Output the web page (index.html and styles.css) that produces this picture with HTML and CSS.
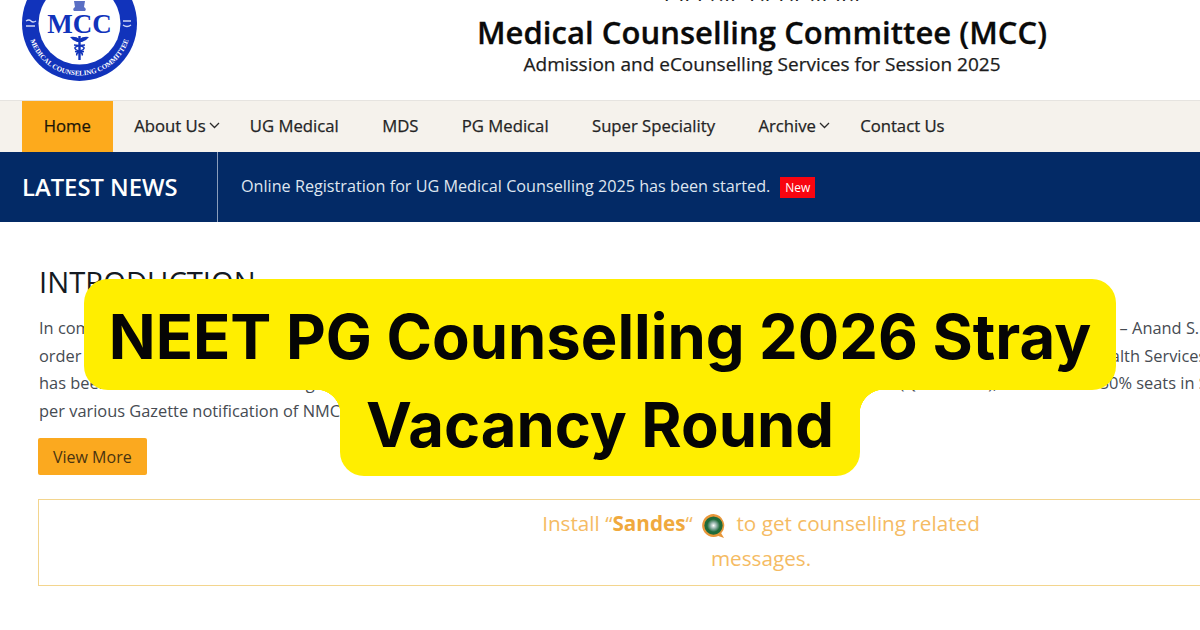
FILE: index.html
```html
<!DOCTYPE html>
<html lang="en">
<head>
<meta charset="utf-8">
<title>NEET PG Counselling 2026 Stray Vacancy Round</title>
<link rel="stylesheet" href="styles.css">
</head>
<body>
<div class="page">
  <header class="masthead">
    <svg class="logo" width="118" height="118" viewBox="0 0 118 118" aria-label="MCC logo">
      <defs>
        <path id="ring-bottom" d="M7.500 59.500a52 52 0 0 0 104 0"/>
        <path id="ring-top" d="M13 59a46 46 0 0 1 92 0"/>
      </defs>
      <circle cx="59.500" cy="59.500" r="57.500" fill="#1133bb"/>
      <circle cx="59.500" cy="59.500" r="41" fill="#fff"/>
      <text class="logo-hindi"><textPath href="#ring-top" startOffset="50%" text-anchor="middle">चिकित्सा परामर्श समिति</textPath></text>
      <text class="logo-ring"><textPath href="#ring-bottom" startOffset="50%" text-anchor="middle">MEDICAL COUNSELING COMMITTEE</textPath></text>
      <text class="logo-mcc" x="59.500" y="69" text-anchor="middle">MCC</text>
      <path d="M54 37h11l-1 6q3 2 1 4h-11q-2-2 1-4z" fill="#5a6fc4"/>
      <path d="M59.500 72v24" stroke="#1133bb" stroke-width="2.400" fill="none"/>
      <path d="M50 73q6-1 9.500 2q3.500-3 9.500-2q-3 4-7 5h-5q-4-1-7-5z" fill="#1133bb"/>
      <path d="M54 81q11 1 10 3.500t-9 3q9 .5 7 4" stroke="#1133bb" stroke-width="1.500" fill="none"/>
      <path d="M65 81q-11 1-10 3.500t9 3q-9 .5-7 4" stroke="#1133bb" stroke-width="1.500" fill="none"/>
      <path d="M6 57q3-2 5 0t5 0M6 62h9M103 57h8M103 61q4 3 8 0" stroke="#cfd8f5" stroke-width="1.300" fill="none"/>
    </svg>
    <div class="titles">
      <div class="hindi">चिकित्सा परामर्श समिति</div>
      <h1 class="title">Medical Counselling Committee (MCC)</h1>
      <p class="subtitle">Admission and eCounselling Services for Session 2025</p>
    </div>
  </header>

  <nav class="nav">
    <a class="nav-item active">Home</a>
    <a class="nav-item caret">About Us<svg class="chev" viewBox="0 0 11 7"><path d="M1 1l4.500 4.500L10 1"/></svg></a>
    <a class="nav-item">UG Medical</a>
    <a class="nav-item">MDS</a>
    <a class="nav-item">PG Medical</a>
    <a class="nav-item">Super Speciality</a>
    <a class="nav-item caret">Archive<svg class="chev" viewBox="0 0 11 7"><path d="M1 1l4.500 4.500L10 1"/></svg></a>
    <a class="nav-item">Contact Us</a>
  </nav>

  <section class="news">
    <div class="news-label">LATEST NEWS</div>
    <div class="news-text">Online Registration for UG Medical Counselling 2025 has been started.<span class="new">New</span></div>
  </section>

  <main class="content">
    <h2 class="intro-title">INTRODUCTION</h2>
    <div class="intro">
      <p class="line">In compliance of the order of Hon'ble Supreme Court of India in Writ Petition (Civil) No. 76 of 2015 Ashish Ranjan &amp; Or vs Union of India &amp; Ors &ndash; Anand S. Biji &amp; Others</p>
      <p class="line">order dated 9th May 2017, the Medical Counselling Committee of the Union Ministry of Health and Family Welfare, Directorate General of Health Services, Government</p>
      <p class="line">has been constituted for conducting counselling for allotment of seats in Under Graduate and Graduate Courses (Quota seat), 15% UG and 50% seats in State</p>
      <p class="line">per various Gazette notification of NMC, Medical Counselling Committee conducts the counselling.</p>
    </div>
    <a class="more">View More</a>
    <div class="sandes">
      <p class="sandes-text">Install &ldquo;<b>Sandes</b>&ldquo; <svg class="sandes-icon" viewBox="0 0 26 28"><defs><radialGradient id="sg"><stop offset="0" stop-color="#fff"/><stop offset=".35" stop-color="#8fb0a6"/><stop offset=".7" stop-color="#1f6b3a"/><stop offset="1" stop-color="#1f6b3a"/></radialGradient></defs><path d="M13 1a12 12 0 1 0 5 23l6 2-3-5a12 12 0 0 0-8-20z" fill="#e8973a"/><circle cx="13" cy="13" r="9.500" fill="url(#sg)"/></svg> to get counselling related<br>messages.</p>
    </div>
  </main>

  <div class="banner">
    <div class="banner-line first">NEET PG Counselling 2026 Stray</div>
    <div class="banner-line second">Vacancy Round</div>
  </div>
</div>
</body>
</html>
```
FILE: styles.css
```css
* { box-sizing: border-box; }
html, body { margin: 0; padding: 0; }
body { background: #fff; font-family: "Open Sans", "Noto Sans", sans-serif; }
.page { position: relative; width: 1200px; height: 630px; overflow: hidden; }

.masthead { position: relative; display: flow-root; height: 100px; }
.logo { position: absolute; left: 20px; top: -36px; }
.logo-ring { font: 700 7px "Liberation Serif", serif; fill: #fff; }
.logo-hindi { font: 700 10px "Noto Sans", sans-serif; fill: #fff; }
.logo-mcc { font: 700 27px "Liberation Serif", serif; fill: #1133bb; }

.titles { display: flex; flex-direction: column; align-items: center; width: 1524px; margin-top: -18px; }
.hindi { font-size: 23px; line-height: 20px; height: 20px; color: #222; }
.title { margin: 11px 0 0; font-size: 31px; line-height: 38px; font-weight: 600; letter-spacing: .05px; color: #0a0a0a; white-space: nowrap; -webkit-text-stroke: .3px #0a0a0a; }
.subtitle { margin: 0; font-size: 19px; line-height: 26px; font-weight: 500; color: #1c1c1c; white-space: nowrap; -webkit-text-stroke: .25px #1c1c1c; }

.nav { display: flex; height: 52px; padding-left: 22px; background: #f5f2ec; border-top: 1px solid #e6e4e0; }
.nav-item { display: flex; align-items: center; padding: 0 21.7px 2px; font-size: 16.7px; font-weight: 500; color: #242424; white-space: nowrap; -webkit-text-stroke: .25px currentColor; }
.nav-item.active { background: #fdaa1c; color: #1d1608; }
.nav-item.caret { padding-right: 0; margin-right: 8.5px; }
.chev { width: 11px; height: 7px; margin-left: 3px; }
.chev path { fill: none; stroke: #2b2b2b; stroke-width: 1.3; }

.news { display: flex; align-items: stretch; height: 70px; background: #032a66; color: #fff; }
.news-label { display: flex; align-items: center; width: 218px; padding-left: 22px; font-size: 23.8px; font-weight: 600; border-right: 1px solid #8a9dbb; white-space: nowrap; }
.news-text { display: flex; align-items: center; padding: 0 0 2px 23px; font-size: 16.2px; color: #dfe5ef; white-space: nowrap; }
.new { margin: 2px 0 0 10px; padding: 0 5px; background: #f80510; color: #fff; font-size: 12px; font-weight: 500; line-height: 21px; }

.content { padding: 42px 0 0 39px; }
.intro-title { margin: 0; font-size: 29.2px; line-height: 36px; font-weight: 500; color: #141a22; white-space: nowrap; }
.intro { margin-top: 14px; }
.line { margin: 0; font-size: 16.4px; line-height: 27.6px; color: #464b52; white-space: nowrap; }
.more { display: inline-block; margin: 13.4px 0 0 -1px; padding: 1px 15px 0; background: #fba91f; border-radius: 2px; font-size: 16px; line-height: 36px; color: #4a3410; }
.sandes { display: block; width: 1446px; height: 87px; margin: 24px 0 0 -1px; padding-top: 6px; border: 1px solid #f3d58e; text-align: center; }
.sandes-text { margin: 0; font-size: 20.7px; line-height: 35.5px; color: #f5bb63; }
.sandes-text b { color: #f0a93d; }
.sandes-icon { width: 25px; height: 27px; vertical-align: -9px; margin: 0 5px 0 3px; }

.banner { position: absolute; left: 84px; top: 279px; width: 1032px; display: flex; flex-direction: column; align-items: center; font-family: "Inter", "Roboto", sans-serif; font-weight: 700; color: #050505; }
.banner-line { background: #ffee00; font-size: 61.5px; white-space: nowrap; text-align: center; position: relative; }
.first { width: 1032px; height: 111px; line-height: 116px; border-radius: 24px; }
.second { width: 520px; height: 86px; line-height: 70px; border-radius: 0 0 24px 24px; }
.second::before, .second::after { content: ""; position: absolute; top: 0; width: 24px; height: 24px; }
.second::before { right: 100%; background: radial-gradient(circle at 0 100%, transparent 24px, #ffee00 24.5px); }
.second::after { left: 100%; background: radial-gradient(circle at 100% 100%, transparent 24px, #ffee00 24.5px); }
```
